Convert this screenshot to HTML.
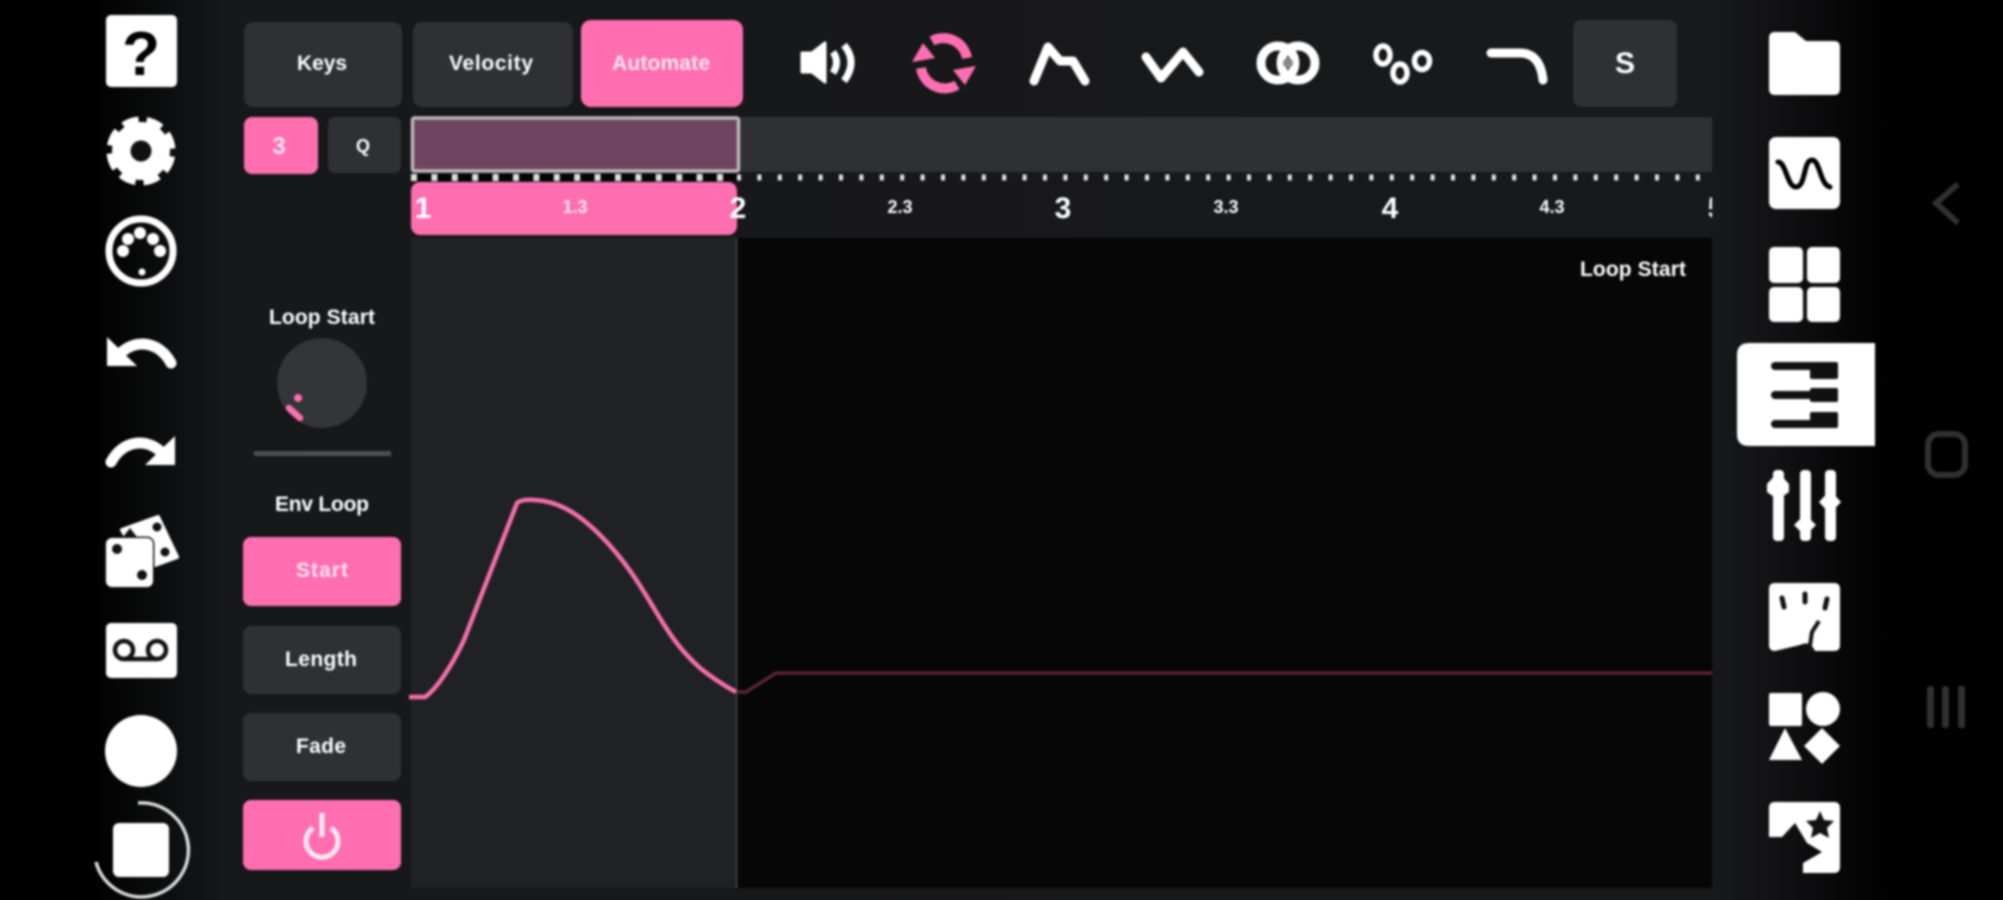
<!DOCTYPE html>
<html><head><meta charset="utf-8"><style>
html,body{margin:0;padding:0;background:#000;width:2003px;height:900px;overflow:hidden}
#bg{position:absolute;left:0;top:0;width:2003px;height:900px;background:linear-gradient(90deg,#000 0,#000 90px,#17181a 225px,#18191b 1712px,#141416 1760px,#000 1890px)}
svg{position:absolute;left:0;top:0;filter:blur(1px)}
text{font-family:"Liberation Sans",sans-serif;font-weight:700;fill:#fff;text-anchor:middle}
</style></head><body><div id="bg"></div>
<svg width="2003" height="900" viewBox="0 0 2003 900">
<!-- top buttons -->
<rect x="244" y="22" width="158" height="85" rx="9" fill="#2e3034"/>
<rect x="413" y="22" width="160" height="85" rx="9" fill="#2e3034"/>
<rect x="581" y="20" width="162" height="87" rx="10" fill="#ff6eb0"/>
<text x="322" y="70" font-size="21" textLength="50">Keys</text>
<text x="491" y="70" font-size="21" textLength="84">Velocity</text>
<text x="661" y="70" font-size="21" textLength="98" style="fill:#ffe4f0">Automate</text>
<rect x="244" y="117" width="74" height="57" rx="8" fill="#ff6eb0"/>
<rect x="328" y="117" width="73" height="56" rx="7" fill="#2e3034"/>
<text x="279" y="154" font-size="24" style="fill:#ffe4f0">3</text>
<text x="363" y="152" font-size="18">Q</text>
<!-- timeline -->
<rect x="411" y="117" width="1301" height="55" fill="#2e3034"/>
<rect x="412.500" y="118" width="326" height="53" fill="#6d4560" stroke="#bdb8bb" stroke-width="3.500" rx="2"/>
<rect x="411" y="174" width="328" height="7" fill="#050505"/>
<line x1="411" y1="177.500" x2="737" y2="177.500" stroke="#e0e0dc" stroke-width="7" stroke-dasharray="6 14.400"/>
<line x1="737" y1="177.500" x2="1712" y2="177.500" stroke="#e6e6e6" stroke-width="6" stroke-dasharray="4 16.400"/>
<rect x="411" y="182" width="326" height="53" rx="9" fill="#ff6eb0"/>
<text x="423" y="218" font-size="30" textLength="13">1</text>
<text x="575" y="213" font-size="18" style="fill:#ffe4f0">1.3</text>
<text x="738" y="218" font-size="30">2</text>
<text x="900" y="213" font-size="18">2.3</text>
<text x="1063" y="218" font-size="30">3</text>
<text x="1226" y="213" font-size="18">3.3</text>
<text x="1390" y="218" font-size="30">4</text>
<text x="1552" y="213" font-size="18">4.3</text>
<clipPath id="c5"><rect x="1600" y="180" width="112" height="60"/></clipPath>
<text x="1716" y="218" font-size="30" clip-path="url(#c5)">5</text>
<!-- graph -->
<rect x="411" y="238" width="326" height="650" fill="#202124"/>
<rect x="737" y="238" width="975" height="650" fill="#060606"/>
<rect x="735.500" y="238" width="2" height="650" fill="#3a3b3d"/>
<text x="1633" y="276" font-size="21" textLength="106">Loop Start</text>
<polyline points="737,692 746,692 776,673 1712,673" fill="none" stroke="#5a2339" stroke-width="3.500"/>
<path d="M409 697H425C435 690 450 670 464 640C478 605 495 560 517 503Q522 499 535 500C555 501 575 510 600 535C625 560 640 585 655 610C670 635 680 650 700 668C715 680 725 686 736 692" fill="none" stroke="#f56fab" stroke-width="4.500" stroke-linejoin="round"/>
<!-- left column -->
<text x="322" y="324" font-size="21" textLength="106">Loop Start</text>
<circle cx="322" cy="383" r="45" fill="#333538"/>
<circle cx="298" cy="398" r="4" fill="#ff6eb0"/>
<line x1="289" y1="408" x2="300" y2="418" stroke="#ff6eb0" stroke-width="6.500" stroke-linecap="round"/>
<rect x="254" y="451" width="137" height="5" fill="#4f5052"/>
<text x="322" y="511" font-size="21" textLength="94">Env Loop</text>
<rect x="243" y="537" width="158" height="69" rx="8" fill="#ff6eb0"/>
<text x="322" y="577" font-size="21" textLength="52" style="fill:#ffe4f0">Start</text>
<rect x="243" y="626" width="158" height="68" rx="8" fill="#2e3034"/>
<text x="321" y="666" font-size="21" textLength="72">Length</text>
<rect x="243" y="713" width="158" height="68" rx="8" fill="#2e3034"/>
<text x="321" y="753" font-size="21" textLength="50">Fade</text>
<rect x="243" y="800" width="158" height="70" rx="8" fill="#ff6eb0"/>
<path d="M313 828A16 16 0 1 0 331 828" fill="none" stroke="#ffe9f3" stroke-width="5"/>
<line x1="322" y1="813" x2="322" y2="837" stroke="#ffe9f3" stroke-width="5"/>
<!-- left icons -->
<rect x="106" y="15" width="71" height="72" rx="5" fill="#fff"/>
<text x="141" y="75" font-size="62" style="fill:#000;font-weight:700">?</text>
<circle cx="141" cy="151" r="29" fill="#fff"/>
<circle cx="141" cy="151" r="29.500" fill="none" stroke="#fff" stroke-width="10" stroke-dasharray="15.500 7.670" transform="rotate(10 141 151)"/>
<circle cx="141" cy="151" r="10.500" fill="#111"/>
<circle cx="141" cy="251" r="32" fill="none" stroke="#fff" stroke-width="7"/>
<g fill="#fff"><circle cx="123" cy="251" r="6"/><circle cx="128" cy="239" r="6"/><circle cx="140" cy="233" r="6"/><circle cx="153" cy="239" r="6"/><circle cx="160" cy="251" r="6"/><circle cx="142" cy="272" r="3.500"/></g>
<polygon points="107,337 107,366 137,366" fill="#fff"/><path d="M118 356C132 339 158 339 171 363" fill="none" stroke="#fff" stroke-width="11" stroke-linecap="round"/>
<g transform="translate(282,99) scale(-1,1)"><polygon points="107,337 107,366 137,366" fill="#fff"/><path d="M118 356C132 339 158 339 171 363" fill="none" stroke="#fff" stroke-width="11" stroke-linecap="round"/></g>
<polygon points="122,530 158,517 177,557 155,565 140,560" fill="#fff" stroke="#fff" stroke-width="4" stroke-linejoin="round"/>
<circle cx="157" cy="527" r="4.500" fill="#111"/><circle cx="165" cy="552" r="4.500" fill="#111"/><polygon points="130,528 137,537 123,537" fill="#111"/>
<rect x="106" y="538" width="47" height="49" rx="6" fill="#fff" stroke="#111" stroke-width="3" paint-order="stroke"/>
<circle cx="117" cy="549" r="5" fill="#111"/><circle cx="142" cy="575" r="5" fill="#111"/>
<rect x="106" y="623" width="71" height="55" rx="5" fill="#fff"/>
<circle cx="124" cy="650" r="9" fill="#fff" stroke="#111" stroke-width="4.500"/><circle cx="157" cy="650" r="9" fill="#fff" stroke="#111" stroke-width="4.500"/><line x1="124" y1="659" x2="157" y2="659" stroke="#111" stroke-width="4.500"/>
<circle cx="141" cy="751" r="36" fill="#fff"/>
<rect x="113" y="823" width="56" height="54" rx="6" fill="#fff"/>
<path d="M138 803A47 47 0 1 1 96 862" fill="none" stroke="#ddd" stroke-width="3.500"/>
<!-- top icons -->
<path d="M802 53H812L825 43V82L812 72H802Z" fill="#fff" stroke="#fff" stroke-width="3" stroke-linejoin="round"/>
<path d="M833 52Q840 62 833 73M844 45Q858 62 844 81" fill="none" stroke="#fff" stroke-width="7"/>
<g fill="none" stroke="#ff6eb0" stroke-width="10"><path d="M932 41A24 24 0 0 1 967 58"/><path d="M957 85A24 24 0 0 1 921 68"/></g>
<polygon points="976,66 953,70 965,85" fill="#ff6eb0"/><polygon points="912,62 935,58 923,43" fill="#ff6eb0"/>
<g fill="none" stroke="#fff" stroke-width="9" stroke-linecap="round" stroke-linejoin="round">
<polyline points="1034,81 1048,47 1060,61 1073,61 1085,81"/>
<polyline points="1146,57 1161,78 1183,52 1199,72"/>
<path d="M1491 53H1520Q1540 53 1543 80"/>
</g>
<g fill="none" stroke="#fff" stroke-width="9"><circle cx="1278" cy="63" r="17"/><circle cx="1298" cy="63" r="17"/></g>
<circle cx="1288" cy="63" r="5" fill="#888"/>
<g fill="none" stroke="#fff" stroke-width="5.500"><ellipse cx="1383" cy="55" rx="7" ry="9"/><ellipse cx="1400" cy="73" rx="7" ry="9"/><ellipse cx="1422" cy="61" rx="7.500" ry="8.500"/></g>
<rect x="1573" y="20" width="104" height="87" rx="8" fill="#2e3034"/>
<text x="1625" y="73" font-size="30">S</text>
<!-- right icons -->
<path d="M1769 38q0-6 6-6H1795L1806 41H1834q6 0 6 6V89q0 6-6 6H1775q-6 0-6-6Z" fill="#fff"/>
<rect x="1769" y="137" width="71" height="72" rx="7" fill="#fff"/>
<path d="M1778 162C1786 162 1787 187 1796 187C1806 187 1803 160 1812 160C1820 160 1820 185 1830 187" fill="none" stroke="#000" stroke-width="5" stroke-linecap="round"/>
<g fill="#fff"><rect x="1769" y="247" width="34" height="36" rx="5"/><rect x="1807" y="247" width="33" height="36" rx="5"/><rect x="1769" y="287" width="34" height="35" rx="5"/><rect x="1807" y="287" width="33" height="35" rx="5"/></g>
<path d="M1749 343H1875V446H1749q-12 0-12-12V355q0-12 12-12Z" fill="#fff"/>
<g fill="#111"><rect x="1771" y="362" width="67" height="8" rx="4"/><rect x="1771" y="391" width="67" height="8" rx="4"/><rect x="1771" y="420" width="67" height="8" rx="4"/><rect x="1810" y="362" width="28" height="17" rx="2"/><rect x="1810" y="388" width="28" height="14" rx="2"/><rect x="1810" y="412" width="28" height="16" rx="2"/></g>
<g fill="#fff"><rect x="1773" y="470" width="11" height="71" rx="4"/><rect x="1800" y="470" width="11" height="71" rx="4"/><rect x="1825" y="470" width="11" height="71" rx="4"/>
<polygon points="1778,472 1789,484 1789,492 1782,497 1774,497 1767,492 1767,484"/><polygon points="1805,514 1816,525 1805,536 1794,525"/><polygon points="1830,490 1841,502 1830,514 1819,502"/></g>
<path d="M1769 589q0-6 6-6H1834q6 0 6 6V645q0 6-6 6H1815Q1810 640 1800 645L1775 651q-6 0-6-6Z" fill="#fff"/>
<g stroke="#111" stroke-width="5" stroke-linecap="round"><line x1="1782" y1="598" x2="1784" y2="607"/><line x1="1805" y1="594" x2="1805" y2="602"/><line x1="1827" y1="599" x2="1825" y2="608"/></g>
<path d="M1819 621L1812 632L1809 652" fill="none" stroke="#111" stroke-width="4"/>
<g fill="#fff"><rect x="1769" y="693" width="33" height="33" rx="2"/><circle cx="1823" cy="709" r="17"/><polygon points="1785,728 1802,760 1769,760"/><polygon points="1822,728 1840,746 1822,764 1804,746"/></g>
<path d="M1769 808q0-6 6-6H1834q6 0 6 6V867q0 6-6 6H1803V863L1822 852L1807 843L1795 823L1782 837H1769Z" fill="#fff"/>
<polygon points="1820,811 1824,820 1834,821 1827,828 1829,838 1820,833 1811,838 1813,828 1806,821 1816,820" fill="#111"/>
<!-- android nav -->
<path d="M1958 184L1936 203L1958 223" fill="none" stroke="#303030" stroke-width="6"/>
<rect x="1928" y="434" width="37" height="41" rx="11" fill="none" stroke="#303030" stroke-width="6"/>
<g fill="#303030"><rect x="1927" y="686" width="7" height="42" rx="3"/><rect x="1942" y="686" width="7" height="42" rx="3"/><rect x="1958" y="686" width="7" height="42" rx="1"/></g>
</svg>
</body></html>
